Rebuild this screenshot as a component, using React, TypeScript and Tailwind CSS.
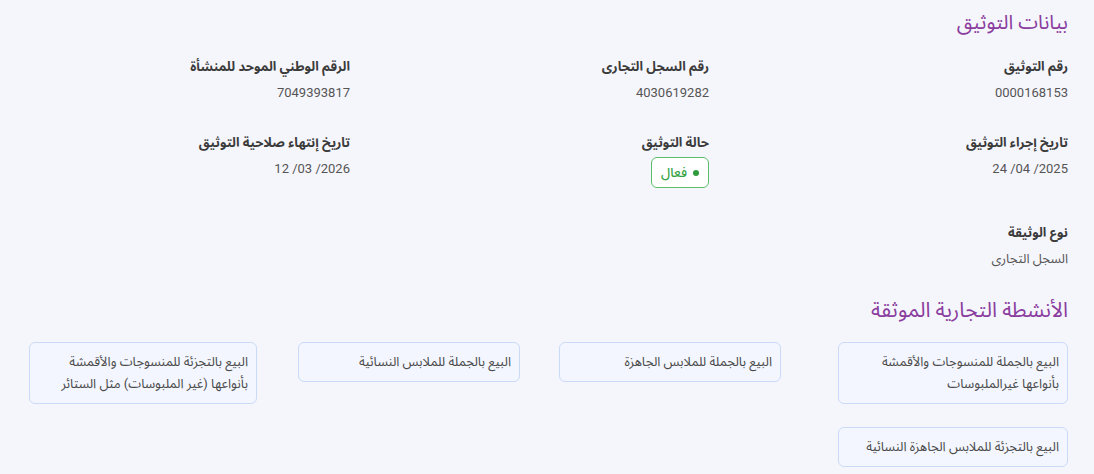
import React from "react";

const font = { fontFamily: "Roboto, 'Noto Sans Arabic', 'Noto Sans', 'DejaVu Sans', sans-serif" };

function Field({ label, children, className = "" }: { label: string; children: React.ReactNode; className?: string }) {
  return (
    <div className={`flex flex-col items-start ${className}`}>
      <div className="text-[13px] font-bold leading-5 text-[#3b3b3b]">{label}</div>
      <div className="mt-[6px] text-[13px] leading-5 text-[#555]">{children}</div>
    </div>
  );
}

function Card({ text, w }: { text: string; w: string }) {
  return (
    <div className={`${w} rounded-md border border-[#cbdaf7] bg-[#f3f6fe] px-2 py-2 text-[13px] leading-[22px] text-[#4a4a4a]`}>
      {text}
    </div>
  );
}

export default function App() {
  return (
    <div dir="rtl" style={font} className="min-h-[474px] w-[1094px] bg-[#f5f6fc] pl-[30px] pr-[26px] pt-2">
      <h2 className="text-[20px] leading-7 text-[#8a3d9e]">بيانات التوثيق</h2>
      <div className="mt-[21px] grid grid-cols-3 gap-x-[39px] gap-y-[30px]">
        <Field label="رقم التوثيق">0000168153</Field>
        <Field label="رقم السجل التجارى">4030619282</Field>
        <Field label="الرقم الوطني الموحد للمنشأة">7049393817</Field>
        <Field label="تاريخ إجراء التوثيق">
          <bdo dir="ltr">24 /04 /2025</bdo>
        </Field>
        <div className="flex flex-col items-start">
          <div className="text-[13px] font-bold leading-5 text-[#3b3b3b]">حالة التوثيق</div>
          <div className="mt-[4px] flex h-[31px] w-[58px] items-center justify-center gap-[6px] rounded-md border border-[#5bbf6a] bg-white text-[13px] font-medium text-[#35a343]">
            <span className="h-[6px] w-[6px] rounded-full bg-[#2e9b3c]" />
            <span>فعال</span>
          </div>
        </div>
        <Field label="تاريخ إنتهاء صلاحية التوثيق">
          <bdo dir="ltr">12 /03 /2026</bdo>
        </Field>
        <Field label="نوع الوثيقة" className="mt-[5px]">
          السجل التجارى
        </Field>
      </div>
      <h2 className="mt-[27px] text-[21px] leading-7 text-[#8a3d9e]">الأنشطة التجارية الموثقة</h2>
      <div className="mt-[18px] flex flex-col items-start gap-[23px]">
        <div className="flex items-start">
          <Card w="w-[230px]" text="البيع بالجملة للمنسوجات والأقمشة بأنواعها غيرالملبوسات" />
          <div className="mr-[57px]">
            <Card w="w-[222px]" text="البيع بالجملة للملابس الجاهزة" />
          </div>
          <div className="mr-[39px]">
            <Card w="w-[222px]" text="البيع بالجملة للملابس النسائية" />
          </div>
          <div className="mr-[41px]">
            <Card w="w-[228px]" text="البيع بالتجزئة للمنسوجات والأقمشة بأنواعها (غير الملبوسات) مثل الستائر" />
          </div>
        </div>
        <Card w="w-[230px]" text="البيع بالتجزئة للملابس الجاهزة النسائية" />
      </div>
    </div>
  );
}
